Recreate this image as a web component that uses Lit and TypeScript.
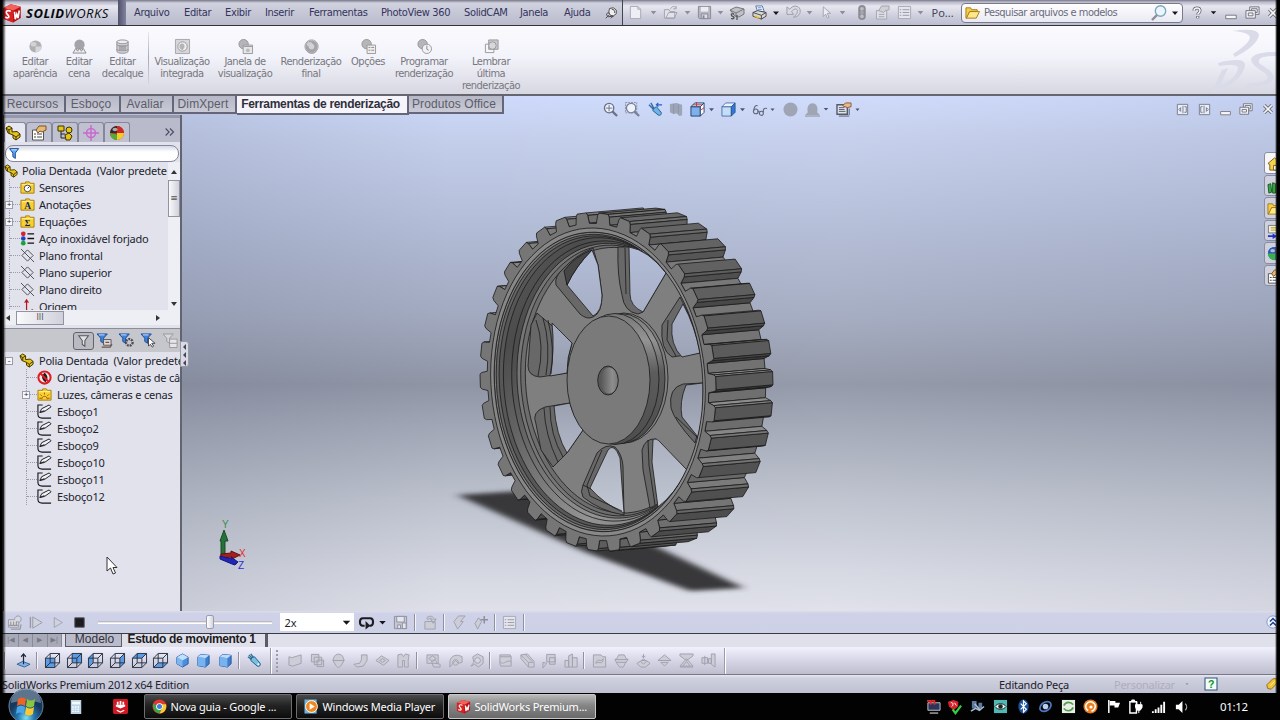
import {LitElement, css, html, svg} from 'lit';
import {customElement, property} from 'lit/decorators.js';

// Small icons, all on a 16 x 16 grid.
const ball = (fill: string) => svg`
  <circle cx="8" cy="8" r="6.500" fill=${fill}/>
  <ellipse cx="6" cy="5.500" rx="3" ry="2.400" fill="#fff" opacity=".45"/>`;
const globe = svg`
  <circle cx="8" cy="8" r="7" fill="#d22c22"/>
  <path d="M8 8V1a7 7 0 0 0-7 7z" fill="#2c2c30"/>
  <path d="M1 8a7 7 0 0 0 7 7l1-5z" fill="#4fae3a"/>
  <path d="M8 15a7 7 0 0 0 7-7L8 8z" fill="#f1cd2c"/>
  <path d="M8 1a7 7 0 0 1 7 7L9 7z" fill="#cc2a22"/>
  <ellipse cx="6" cy="4.500" rx="2.500" ry="1.700" fill="#fff" opacity=".6"/>`;
const folder = (inner: unknown) => svg`
  <path d="M1 3.500V14h14V3.500h-4L10 2H6v1.500z" fill="#f7cf2e" stroke="#a87d10"/>
  <path d="M2 5h12" stroke="#fff4a8"/>${inner}`;
const part = svg`
  <path d="M1 3l3-2 3 2v4l5-.5 3 2.500v3L11 15 8 13V10L3 8z" fill="#e8c417" stroke="#3c3200"/>
  <path d="M1 3l3 2 3-2M4 5v3M8 10l3 2 4-3M11 12v3" stroke="#3c3200" fill="none"/>`;
const funnel = (fill: string, stroke: string) => svg`
  <path d="M2 2h11L9 7.500V14l-3-2V7.500z" fill=${fill} stroke=${stroke} stroke-width="1.200"/>`;
const funnelSmall = svg`
  <path d="M0 1h11L7 5.500V11L4 9V5.500z" fill="#3f83d8" stroke="#1b4b9a"/>
  <path d="M2 2h6" stroke="#d5eaff"/>`;
const cubeLines = svg`<path d="M.5 5.500h10v10H.5zM5.500.5h10v10h-10zM.5 5.500l5-5M10.500 5.500l5-5M10.500 15.500l5-5M.5 15.500l5-5" fill="none" stroke="#26303e"/>`;
const cubeFace = (d: string) => svg`<path d=${d} fill="#5c9be6"/>${cubeLines}`;
const solidCube = (tilt: boolean) => tilt
  ? svg`<path d="M8 1l6 3.500v7L8 15l-6-3.500v-7z" fill="#4b8edb" stroke="#235a9e"/><path d="M2 4.500L8 8l6-3.500L8 1z" fill="#bfe0ff"/><path d="M8 8v7l-6-3.500v-7z" fill="#7cb6f2"/>`
  : svg`<path d="M2 4l3-2.500 9 1v9L10 15l-8-1.500z" fill="#3e7fcc" stroke="#235a9e"/><path d="M2 4l8 1.500V15l-8-1.500z" fill="#78b3f0"/><path d="M2 4l3-2.500 9 1-4 3z" fill="#b9dcff"/>`;
const wrench = svg`
  <path d="M2 2l4 4M4 1l3 4M1 4l4 3" stroke="#2f6f96" stroke-width="1.500"/>
  <path d="M5 5l3-1 6 7c1 2-1 4-3 3L4 8z" fill="#78bfe0" stroke="#1f5d86"/>
  <circle cx="12" cy="12" r="1" fill="#fff"/>`;
const restore = svg`
  <path d="M5 2h10v8H5z" fill="#f4f4f8" stroke="#6d6e7a"/><path d="M7 4h6v4H7z" fill="none" stroke="#6d6e7a"/>
  <path d="M1 6h10v8H1z" fill="#f4f4f8" stroke="#6d6e7a"/><path d="M3.500 8.500h5v3h-5z" fill="none" stroke="#6d6e7a"/>`;
const closeX = svg`
  <path d="M3 3l10 10M13 3L3 13" stroke="#6d6e7a" stroke-width="4.500"/>
  <path d="M3 3l10 10M13 3L3 13" stroke="#f7f7fa" stroke-width="2.200"/>`;
const magnifier = (stroke: string) => svg`
  <circle cx="6.500" cy="6.500" r="5" fill="#eef3fb" stroke=${stroke} stroke-width="1.400"/>
  <path d="M10 10l5 5" stroke=${stroke} stroke-width="2.400"/>`;
const swCube = svg`
  <path d="M1 4l6-3 8 2v9l-6 3.500-8-3z" fill="#b80f12"/>
  <path d="M1 4l6-3 8 2-6 3z" fill="#f0625c"/><path d="M1 4l8 2v9.500L1 12.500z" fill="#d92023"/>
  <path d="M7 6.700c-3-1.500-4.500.500-3 2s2 2.500 1 3-2.500-.5-2.500-.5M10 7l.6 6 1.200-4 1 3 1-6" stroke="#fff" stroke-width="1.300" fill="none"/>`;
const play = svg`<path d="M4 2l10 6-10 6z" fill="#d0d2de" stroke="#9a9ba8"/>`;
const grey = (d: string) => svg`<path d=${d} fill="#cdcdd8" stroke="#a0a1ae"/>`;

const ICONS: Record<string, unknown> = {
  logo: swCube,
  caret: svg`<path d="M5 6.500h6L8 10z" fill="#8d8e9c"/>`,
  caretDark: svg`<path d="M4 6h8l-4 4.500z" fill="#16161c"/>`,
  caretMid: svg`<path d="M5 6.500h6L8 10z" fill="#4c5570"/>`,
  pin: svg`<path d="M6 2l5-1 4 3 0 5-4 3-4-1-2-4z" fill="#eee" stroke="#444" stroke-width="1.200"/><path d="M6 8c-5-1-5 4-1 5l6-1-3 3M1 15l4-4M9 3c3 0 4 2 4 5" fill="none" stroke="#444" stroke-width="1.300"/>`,
  page: svg`<path d="M2.500 1.500h8l3 3v10h-11z" fill="#eeeef4" stroke="#a6a7b2"/><path d="M10.500 1.500v3h3" fill="none" stroke="#a6a7b2"/>`,
  open: svg`<path d="M1.500 5h5l1 2h5v7h-11zM3 14l3-6h9l-3 6z" fill="#e2e2ea" stroke="#a0a1ad"/><path d="M8 4c2-3 4-3 6-1m0-2v3h-3" fill="none" stroke="#a0a1ad"/>`,
  save: svg`<path d="M1.500 1.500h13v13h-12l-1-1z" fill="#b6b7c2" stroke="#858692"/><path d="M4 2h8v5H4z" fill="#ececf2"/><path d="M4.500 9.500h7v5h-7z" fill="#dcdce4" stroke="#858692"/><path d="M6 11h2v3H6z" fill="#858692"/>`,
  rebuild: svg`<path d="M1 5l6-3 8 2v5l-5 3-4-1z" fill="#c0c0c6" stroke="#77777f"/><path d="M1 5l6 3 8-4M7 8v4" fill="none" stroke="#77777f"/><path d="M5 9c-4-1-3 2-1 2.500s1 3-2 2M8 10v5" fill="none" stroke="#555" stroke-width="1.300"/>`,
  print: svg`<path d="M4 1h7l2 6H6z" fill="#fff" stroke="#5470a0"/><path d="M6 3h4M6.500 5H11" stroke="#4f86d0"/><path d="M1 8l5-2 9 2v4l-5 3-9-3z" fill="#d8d8d2" stroke="#44444a"/><path d="M1 8l9 3 5-3M10 11v4" fill="none" stroke="#44444a"/><path d="M3 12l5 2" stroke="#e9b92b" stroke-width="1.500"/>`,
  undo: svg`<path d="M1 2v8h7L6 7c3-4 7-3 6 0 0 3-2 4-4 6 5 0 8-4 7-8-1-5-8-5-11-.500z" fill="#d9d9e2" stroke="#9a9ba8"/>`,
  cursor: svg`<path d="M4 1v12l3-3 2 5 2-1-2-5h4z" fill="#ececf3" stroke="#9a9ba8"/>`,
  light: svg`<rect x="4.500" y="0" width="8" height="16" rx="4" fill="#8b8c94"/><circle cx="8.500" cy="4" r="2" fill="#bdbdc4"/><circle cx="8.500" cy="8" r="2" fill="#a5a5ad"/><circle cx="8.500" cy="12" r="2" fill="#bdbdc4"/>`,
  prop: svg`<path d="M1.500 6h11v9h-11z" fill="#dedee6" stroke="#a2a3ae"/><path d="M4 6l3-5h8v4l-4 1-2 2z" fill="#d0d0d8" stroke="#a2a3ae"/><path d="M4 10h6M4 12.500h6" stroke="#a2a3ae"/>`,
  list: svg`<path d="M1.500 1.500h13v13h-13z" fill="#e4e4ec" stroke="#a7a8b4"/><path d="M6 5h7M6 8h7M6 11h7M3 5h1.500M3 8h1.500M3 11h1.500" stroke="#9899a6"/>`,
  search: svg`<circle cx="9.500" cy="6" r="5.200" fill="#eaf6fd" stroke="#7ea6bd" stroke-width="1.400"/><path d="M6 10l-5 5" stroke="#8b8d99" stroke-width="2.400"/>`,
  help: svg`<path d="M4 5c0-5 8-5 8 0 0 3-3 3-3 5M9 12v3" fill="none" stroke="#5e5f6c" stroke-width="4"/><path d="M4 5c0-5 8-5 8 0 0 3-3 3-3 5M9 12.500v2" fill="none" stroke="#f6f6f9" stroke-width="2"/>`,
  min: svg`<path d="M2 10.500h12v4H2z" fill="#f6f6f9" stroke="#6d6e7a"/>`,
  restore, closeX,
  folderOpen: svg`<path d="M1 3h5l1 2h6v2H5l-3 7H1z" fill="#f4cf46" stroke="#a57a14"/><path d="M1.500 14L5 7h10.500L12 14z" fill="#ffe78c" stroke="#a57a14"/>`,

  ballGrey: svg`${ball('#b0b0b3')}<path d="M8 8h6.500A6.500 6.500 0 0 1 8 14.500z" fill="#d6d6da"/>`,
  ballFinal: svg`${ball('#a4a4a8')}<path d="M8 1a7 7 0 1 0 .1 0M4 13l2 2h5l2-2" fill="none" stroke="#97979b"/><circle cx="8" cy="8" r="3" fill="#d3d3d7"/>`,
  sceneGrey: svg`<circle cx="8" cy="6" r="5.500" fill="#a4a4a8"/><path d="M1 15l3-5 2 3 2-3 2 3 2-3 3 5z" fill="#eee" stroke="#8b8b90"/>`,
  decal: svg`<path d="M2 3v10c0 3 12 3 12 0V3z" fill="#d2d2d6" stroke="#8e8e94"/><ellipse cx="8" cy="3" rx="6" ry="2" fill="#eee" stroke="#8e8e94"/><path d="M4 7h8v5H4z" fill="#a9a9ae"/><path d="M2 6c0 2 12 2 12 0M2 11c0 2 12 2 12 0" fill="none" stroke="#8e8e94"/>`,
  integrated: svg`<path d="M.5.5h15v15H.5z" fill="#d7d7db" stroke="#a5a5aa"/><circle cx="8" cy="8" r="5" fill="#eee" stroke="#999"/><path d="M5 6c3-3 6 0 5 3l-2 3C5 11 4 8 5 6z" fill="#b3b3b8"/>`,
  window: svg`<circle cx="6" cy="5.500" r="5" fill="#b5b5ba" stroke="#999"/><path d="M5.500 6.500h10v9h-10z" fill="#e6e6ea" stroke="#999"/><path d="M6 8h9" stroke="#999"/><circle cx="10.500" cy="12" r="2" fill="#bbb"/>`,
  options: svg`<circle cx="6" cy="5.500" r="5" fill="#b5b5ba" stroke="#999"/><path d="M6.500 6.500h9v9h-9z" fill="#eee" stroke="#999"/><path d="M8 9h2M8 12h2M11 9h3M11 12h3" stroke="#888"/>`,
  schedule: svg`<circle cx="6" cy="5.500" r="5" fill="#b5b5ba" stroke="#999"/><circle cx="10.500" cy="10.500" r="5" fill="#f2f2f4" stroke="#999"/><path d="M10.500 7v4l2 1" fill="none" stroke="#888"/>`,
  recall: svg`<path d="M5 1h10v10H5z" fill="#c9c9ce" stroke="#999"/><path d="M1.500 5.500h9v9h-9z" fill="none" stroke="#999"/><circle cx="9" cy="7" r="4" fill="#d8d8dc" stroke="#999"/>`,

  zoomFit: svg`${magnifier('#6b7187')}<path d="M6.500 3v7M3 6.500h7" stroke="#6b7187"/>`,
  zoomArea: svg`<path d="M.5.5h12v11H.5z" fill="none" stroke="#8b90a4" stroke-dasharray="2 1"/>${magnifier('#7a8097')}`,
  prevView: svg`<path d="M1 3l7 7M3 1l4 7" stroke="#2e6ca8" stroke-width="1.500"/><path d="M6 7l3-2 5 6c1 2-1 4-3 3L5 9z" fill="#6db3e4" stroke="#245d94"/><path d="M9 3h6M11 1L9 3l2 2" fill="none" stroke="#2b5fc4" stroke-width="1.300"/>`,
  section: svg`<path d="M1 2l7-1 6 2v11l-3 1-3-3-3 1-4-2z" fill="#9fa5b8"/><path d="M5 2v10M10 3v9" stroke="#8d93a8"/>`,
  viewOr: svg`<path d="M1 5h10v10H1z" fill="#7db1ec" stroke="#24416d"/><path d="M1 5l4-4h10l-4 4z" fill="#dbe9fa" stroke="#24416d"/><path d="M11 5l4-4v10l-4 4z" fill="#fff" stroke="#24416d"/><path d="M7 0v5M3 3h10M11 9l4-3" stroke="#b8373c"/>`,
  display: svg`<path d="M1 5h10v10H1z" fill="#c4ddf8" stroke="#5172a5"/><path d="M1 5l4-4h10l-4 4z" fill="#e9f3fd" stroke="#5172a5"/><path d="M11 5l4-4v10l-4 4z" fill="#3278d6" stroke="#2c5593"/>`,
  glasses: svg`<circle cx="4" cy="10" r="2.500" fill="none" stroke="#62677a" stroke-width="1.200"/><circle cx="10" cy="12" r="2.200" fill="none" stroke="#62677a" stroke-width="1.200"/><path d="M2 9c0-4 2-6 4-5M12 11c0-4 1-5 4-4M6 10h2" fill="none" stroke="#62677a" stroke-width="1.200"/>`,
  appear: svg`<circle cx="8" cy="8" r="7.500" fill="#9fa5b5"/>`,
  scene: svg`<path d="M0 14l3-3c-3-13 13-13 10 0l3 3z" fill="#9fa5b5"/><path d="M0 15h16" stroke="#aab0c0" stroke-width="2"/>`,
  viewSet: svg`<path d="M0 3h11v10H0z" fill="#dfe3ea" stroke="#55596a" stroke-width="1.500"/><path d="M2 15h11M2 6h6M2 8h6M2 10h7M13 7v7" stroke="#55596a"/><path d="M6 4l3-3h6v4l-4 1z" fill="#e9b98a" stroke="#8a5a33"/>`,
  paneL: svg`<path d="M2.500 2.500h11v11h-11z" fill="#e9edf5" stroke="#767c8f"/><path d="M8.500 4v8M10 5h2v6h-2M6 6L4 8l2 2z" fill="none" stroke="#767c8f"/>`,
  paneR: svg`<path d="M2.500 2.500h11v11h-11z" fill="#e9edf5" stroke="#767c8f"/><path d="M7.500 4v8M6 5H4v6h2M10 6l2 2-2 2z" fill="none" stroke="#767c8f"/>`,

  part,
  propMgr: svg`<path d="M1.500 5h11v10h-11z" fill="#fff" stroke="#555"/><path d="M3 9h2M3 12h2M6 9h5M6 12h5" stroke="#444"/><path d="M5 5l3-4h7v4l-4 2-2-1-2 2z" fill="#e8b878" stroke="#7c5322"/>`,
  config: svg`<path d="M1 1h6v5H1z" fill="#e8c417" stroke="#3c3200"/><path d="M4 6v7h4M4 9h4" stroke="#222" fill="none"/><circle cx="12" cy="5" r="3" fill="#e8c417" stroke="#3c3200"/><path d="M8 10l4-2 3 3-2 4H9z" fill="#e8c417" stroke="#3c3200"/>`,
  dimx: svg`<circle cx="8" cy="8" r="4.500" fill="none" stroke="#c968cf" stroke-width="1.400"/><path d="M8 0v16M0 8h16" stroke="#c968cf" stroke-width="1.400"/>`,
  globe,
  globeSide: svg`<circle cx="8" cy="8" r="7" fill="#2f62c8"/><path d="M8 1a7 7 0 0 0-7 7h7z" fill="#2c58b4"/><path d="M1 8a7 7 0 0 0 8 7V8z" fill="#3cae4a"/><path d="M9 2a7 7 0 0 1 6 6H9z" fill="#cf2b2b"/><ellipse cx="6" cy="5" rx="2.500" ry="1.700" fill="#fff" opacity=".6"/>`,
  chev2: svg`<path d="M3 4l4 4-4 4M8 4l4 4-4 4" fill="none" stroke="#4a4b60" stroke-width="1.300"/>`,
  funnelBlue: svg`${funnel('#5fa8ec', '#15489c')}<path d="M4 3.500h7" stroke="#e4f3ff"/>`,
  funnelBare: funnel('#e2e2e6', '#55555c'),
  fAnim: svg`${funnelSmall}<path d="M7 7h8v6H7z" fill="#ddd" stroke="#555"/><path d="M5 15h9l2-3M9 10h4" stroke="#774f44" stroke-width="1.400"/>`,
  fDrive: svg`${funnelSmall}<circle cx="11" cy="10" r="3.500" fill="none" stroke="#4b4b52" stroke-width="2.500" stroke-dasharray="2 1"/>`,
  fSel: svg`${funnelSmall}<path d="M8 5v9l2-2 2 3 1.500-1-2-3H15z" fill="#fff" stroke="#444"/>`,
  fRes: svg`<path d="M0 1h11L7 5.500V11L4 9V5.500z" fill="#d6d6dc" stroke="#999"/><path d="M7 6.500h8v9H7zM7 11h8" fill="#e6e6ea" stroke="#999"/>`,
  sensor: folder(svg`<circle cx="8" cy="9" r="3.500" fill="#fff" stroke="#444"/><path d="M8 9l2-2" stroke="#222"/>`),
  annot: folder(svg`<text x="8" y="12.800" text-anchor="middle" font-size="10" font-weight="700" font-family="Liberation Serif, serif" fill="#0c2a78">A</text>`),
  equat: folder(svg`<text x="8" y="12.500" text-anchor="middle" font-size="9" font-weight="700" font-family="Liberation Serif, serif" fill="#0c1a58">Σ</text>`),
  lights: folder(svg`<path d="M5 13c0-4 6-4 6 0M8 6v2M3.500 8l1.500 1.500M12.500 8L11 9.500M2.500 12h2M11.500 12h2" fill="none" stroke="#9a4c10"/>`),
  material: svg`<circle cx="3.500" cy="3" r="2.500" fill="#d6252a"/><circle cx="3.500" cy="8" r="2.500" fill="#2440c8"/><circle cx="3.500" cy="13" r="2.500" fill="#18a338"/><path d="M8 3h7M8 8h7M8 13h7" stroke="#111" stroke-width="1.400"/>`,
  plane: svg`<path d="M1 1l14 14M8 2l6 6-6 6-6-6zM7 7l2 2" fill="none" stroke="#4a4a52"/>`,
  origin: svg`<path d="M7 13V2M5 4l2-3 2 3M3 13h7" fill="none" stroke="#b5161c" stroke-width="1.300"/><circle cx="13" cy="12" r="1.200" fill="#b5161c"/>`,
  noView: svg`<circle cx="8" cy="8" r="6.500" fill="#f5e9e9" stroke="#e01b22" stroke-width="2.200"/><path d="M8 3c-4 3-3 8 1 10 3-3 3-7-1-10z" fill="#1c1c1c"/><path d="M3.500 3.500l9 9" stroke="#e01b22" stroke-width="2"/>`,
  sketch: svg`<path d="M6 1H1v10c0 3 2 4 4.500 4H15" fill="none" stroke="#16161a" stroke-width="1.200"/><path d="M3 9l2-4 8-4 2 2-7 5zM3 9l5-2" fill="#f2f2f6" stroke="#16161a"/>`,

  house: svg`<path d="M1 8l7-6 7 6-2 1v6H3V9z" fill="#f5d34c" stroke="#7c5a12"/><path d="M7 10h3v5H7z" fill="#fff" stroke="#7c5a12"/>`,
  library: svg`<path d="M1 6l3-1 1 9-3 1zM6 4l3 1v10H6z" fill="#35a845" stroke="#175a22"/><path d="M10 3l4-1v12l-4 1z" fill="#e8b33a" stroke="#7c5a12"/>`,
  palette: svg`<path d="M1.500 1.500h12v8h-12z" fill="#eee" stroke="#777"/><path d="M4 4h8M4 6.500h8" stroke="#c6b62c" stroke-width="1.500"/><path d="M1 13h7" stroke="#1e2fd0" stroke-width="1.800"/><path d="M6 10l5 3-5 3z" fill="#1e2fd0"/>`,

  calc: svg`<path d="M1.500 5h11v8h-11z" fill="#ddd" stroke="#9899a6"/><path d="M8 4c1-4 7-4 7 0s-2 4-5 3" fill="#d8d8e0" stroke="#9899a6"/><path d="M4 15h10l1-5M4 7v4M7 7v4M10 7v4M2 11h10" stroke="#9899a6" stroke-width="1.300"/>`,
  playStart: svg`<path d="M1.500 2v12" stroke="#9a9ba8" stroke-width="1.500"/>${play}`,
  play,
  stop: svg`<path d="M3 3h10v10H3z" fill="#1c1c20" stroke="#50505a"/>`,
  loop: svg`<path d="M6 11.500H4c-4 0-4-8 0-8h8c4 0 4 8 0 8h-1" fill="none" stroke="#1b1b20" stroke-width="2.200"/><path d="M7 6.500v9l5-4z" fill="#1b1b20"/>`,
  saveG: svg`<path d="M1.500 1.500h13v13h-13z" fill="#c6c7d4" stroke="#8f909e"/><path d="M4 1.500h8v6H4z" fill="#e6e6ef" stroke="#8f909e"/><path d="M5 10.500h3v4H5zM10 8.500h4v6h-4z" fill="#e6e6ef" stroke="#8f909e"/>`,
  wizard: grey('M2 7h11v8H2zM4 3c3-3 7-2 8 2l2-1-3 5-3-4 2 0c-1-2-3-2-5 0z'),
  key: grey('M2 7l5-6h7l-5 6 3 0-6 8z'),
  keyAdd: svg`${grey('M2 9l4-6 3 4-4 8z')}<path d="M8 5h8M12 1v8" stroke="#8f909e" stroke-width="1.600"/>`,
  up2: svg`<circle cx="8" cy="8" r="7" fill="#eef3fc" stroke="#8290b4"/><path d="M4.500 7.500L8 4l3.500 3.500M4.500 12L8 8.500l3.500 3.500" fill="none" stroke="#1c3f90" stroke-width="1.700"/>`,

  normal: svg`<path d="M1 12l6-3 8 3-6 3z" fill="#7fb4e6" stroke="#2e6296"/><path d="M8 12V1M5.500 4L8 1l2.500 3" stroke="#1c2a3c" stroke-width="1.300" fill="none"/>`,
  cFront: cubeFace('M.5 5.500h10v10H.5z'),
  cBack: cubeFace('M5.500.5h10v10h-10z'),
  cLeft: cubeFace('M.5 5.500l5-5v10l-5 5z'),
  cRight: cubeFace('M10.500 5.500l5-5v10l-5 5z'),
  cTop: cubeFace('M.5 5.500l5-5h10l-5 5z'),
  cBottom: cubeFace('M.5 15.500l5-5h10l-5 5z'),
  iso: solidCube(true),
  tri: solidCube(false),
  wrench,
  g1: grey('M1 4l3 1 10-3v9L5 14l-4-1z'),
  g2: grey('M1.500 1.500h8v8h-8zM4.500 4.500h8v8h-8zM7.500 7.500h7v7h-7z'),
  g3: grey('M3 5c1-5 9-5 10 0l1 3-3 5c-2 3-4 3-6 0L2 8zM2 8h12'),
  g4: grey('M1 12l6-1 2-4V2h6v6l-4 6-7 1z'),
  g5: grey('M1 8l6-5 8 5-6 5zM5 8l3-2 3 2-3 2z'),
  g6: grey('M2 2l4-1 2 3 2-3 4 1-1 6 0 7H9V8H7v7H2z'),
  g7: grey('M1 2h12v9H1zM3 6l4-3 4 3-4 3zM6 9c3-3 6-1 5 2l4 1v3H8z'),
  g8: grey('M2 9c1-7 8-8 13-5v6l-4 1-3-3-6 7zM8 7a3 3 0 1 0 .1 0'),
  g9: grey('M3 4l5-3 6 3v7l-5 4-4-3-4 2 3-4zM8 5a3 3 0 1 0 .1 0'),
  g10: grey('M2 2h11l1 2v10H3l-1-2zM2 4h12M2 9c4 5 6-2 12 0'),
  g11: grey('M1 2l7-1 7 8v6h-6l-8-9zM1 2l8 8v5M9 10h5M5 1l8 8'),
  g12: grey('M5 1.500h9v8H5zM8 5h6v7H8zM1 10l4 1-4 5z'),
  g13: grey('M1 8h4v7H1zM5 3l4-2v14H5zM9 5h5v10H9z'),
  g14: grey('M1.500 2h8l2 2h3v11h-13zM4 11c2-7 5 0 8-5-1 8-5 2-8 5z'),
  g15: grey('M3 6l2-4h6l2 4 2 1-3 4-2 4H6l-3-4L1 7zM1 7h14M3 10h10'),
  g16: grey('M1 11l5-3h5l4 3-5 4H5zM5 9l3-3 3 3-3 3zM8 1v4M6 3l2 2 2-2'),
  g17: grey('M1 8l7-6 7 6zM4 10h8l-4 4zM2 8h12'),
  g18: grey('M1 1h14v2L8 8 1 3zM1 14l7-8 7 8zM4 14l4-5 4 5M1 15h14'),
  g19: grey('M1 5h6v6H1zM8 6h3v5H8zM11 1h4v14l-4-3zM4 3v10'),

  helpGreen: svg`<path d="M0 0h16v16H0z" fill="#f3fbf7" stroke="#31557c" stroke-width="1.400"/><text x="8" y="13" font-size="14" font-weight="700" text-anchor="middle" font-family="Liberation Sans, sans-serif" fill="#089427">?</text>`,
  tag: svg`<path d="M2 9l7-7h5l1 4-8 8-4-1z" fill="#f0c434" stroke="#8f6510"/><path d="M6 10l5-5" stroke="#fff3b4"/>`,
  calcWin: svg`<path d="M2 0h12v16H2z" fill="#bcd3e6"/><path d="M3.500 2h9v3h-9z" fill="#f3fafe"/><path d="M3.500 8h9M3.500 10.500h9M3.500 13h9" stroke="#f7fbff" stroke-width="1.500" stroke-dasharray="2 1"/>`,
  pdf: svg`<rect width="16" height="16" rx="1.500" fill="#d01822"/><path d="M5 6V3M8 6V2M11 6V3" stroke="#fff" stroke-width="1.800"/><path d="M3 6h10v2l-5 2-5-2z" fill="#fff"/><path d="M4 12l4 2 4-2" stroke="#fff" stroke-width="1.300"/>`,
  chrome: svg`<circle cx="8" cy="8" r="7.500" fill="#e0392c"/><path d="M1.300 4.800C0 9 3 15 8 15.500L10 10 6 8z" fill="#39a84b"/><path d="M15 5.500c1 4-1 9.500-7 10l3-6V5.500z" fill="#f7cb32"/><circle cx="8" cy="8" r="3.600" fill="#fff"/><circle cx="8" cy="8" r="2.700" fill="#3f82dd"/>`,
  wmp: svg`<path d="M.5.5h13v15H.5z" fill="#6db5e4"/><circle cx="8" cy="8" r="6.300" fill="#f0861c" stroke="#fff"/><path d="M6 4.500l5.500 3.500L6 11.500z" fill="#fff"/>`,
  t1: svg`<path d="M2 4h13v8H2z" fill="#2a345a" stroke="#c7c7cc"/><path d="M4 15h9" stroke="#aaa" stroke-width="1.500"/><path d="M1 2h4v4M6 2h3v4" fill="none" stroke="#e82525" stroke-width="1.800"/>`,
  t2: svg`<path d="M1 3l6-2 5 2v5l-5 4-5-4z" fill="#d4242a"/><path d="M4 4c3-1 3 3 1 4M8 4l2 3" stroke="#fff" fill="none"/><path d="M6 11l3 4 6-8" fill="none" stroke="#2fd042" stroke-width="2.400"/>`,
  t3: svg`<path d="M2 2h5v8H2zM9 4h4v6H9z" fill="#5d7a9c"/><path d="M1 13l5-3 4 2 5-4M5 5l6 7" stroke="#a9bed4" stroke-width="1.600" fill="none"/>`,
  t4: svg`<path d="M1 1h14v14H1z" fill="#4db8b4"/><path d="M2 8c3-4 9-4 12 0-3 4-9 4-12 0z" fill="#dff4f2" stroke="#222"/><circle cx="8" cy="8" r="2.400" fill="#222"/>`,
  bt: svg`<ellipse cx="8" cy="8" rx="5.500" ry="7.500" fill="#1a4f9c"/><path d="M5 5l6 6-3 3V2l3 3-6 6" fill="none" stroke="#fff" stroke-width="1.300"/>`,
  orbit: svg`<ellipse cx="8" cy="8" rx="6.500" ry="4.500" fill="none" stroke="#4e78c0" stroke-width="1.800" transform="rotate(-35 8 8)"/><circle cx="8" cy="8" r="3" fill="#b9cdf0"/>`,
  sync: svg`<path d="M1 1h14v14H1z" fill="#e8eee4"/><path d="M3 7c2-5 8-4 10-1M13 9c-2 5-8 4-10 1" fill="none" stroke="#569c50" stroke-width="1.800"/>`,
  avast: svg`<circle cx="8" cy="8" r="7.500" fill="#ee7d1d"/><circle cx="8" cy="8" r="5" stroke="#fff" stroke-width="1.800" stroke-dasharray="27 6" transform="rotate(120 8 8)"/><circle cx="8.500" cy="8.500" r="1.700" fill="#fff"/>`,
  flag: svg`<path d="M3 1v14" stroke="#fff" stroke-width="1.600"/><path d="M4 2h6v2h5l-2 5H9V7H4z" fill="#fff"/>`,
  power: svg`<path d="M2 3h7v12H2z" fill="none" stroke="#fff" stroke-width="1.500"/><path d="M4 1h3v2H4zM8 6h7v3l-2 3h-3L8 9zM9.500 3v3M13.500 3v3M11.500 12v3" fill="#fff" stroke="#fff"/>`,
  signal: svg`<path d="M2 15v-2M5 15v-4M8 15V9M11 15V6M14 15V3" stroke="#fff" stroke-width="2"/>`,
  sound: svg`<path d="M2 6h3l4-4v13l-4-4H2z" fill="#fff"/><path d="M12 5c2 2 2 5 0 7" fill="none" stroke="#aaa" stroke-width="1.300"/>`,
};

@customElement('sw-icon')
export class SwIcon extends LitElement {
  @property() name = '';
  @property({type: Number}) size = 16;

  static get styles() {
    return css`
      :host { display: block; flex: none; }
      svg { display: block; overflow: visible; }
    `;
  }

  render() {
    return html`<svg width=${this.size} height=${this.size} viewBox="0 0 16 16" fill="none">${ICONS[this.name]}</svg>`;
  }
}

type Slot = [name: string, center: number, size?: number];

// Lays a run of icons out in flow, each one centred on its own tick.
function strip(start: number, slots: Slot[]) {
  let x = start;
  return slots.map(([name, center, size = 15]) => {
    const w = name === '|' ? 2 : size;
    const gap = center - w / 2 - x;
    x = center + w / 2;
    return name === '|'
      ? html`<i class="sep" style="margin-left:${gap}px"></i>`
      : html`<sw-icon name=${name} size=${size} style="margin-left:${gap}px"></sw-icon>`;
  });
}

// Pulley projection: radius is relative to the tooth tips, depth to the width.
type Pt = [number, number];
const TEETH = 34;
const project = (r: number, a: number, depth = 0): Pt => [
  598 + 118 * r * Math.cos(a) + 57 * depth,
  382 + 169 * r * Math.sin(a) + 9 * r * Math.cos(a) - 5 * depth,
];
const toPath = (pts: Pt[]) => 'M' + pts.map(([x, y]) => `${x.toFixed(1)} ${y.toFixed(1)}`).join('L') + 'Z';
const circle = (r: number, depth: number) =>
  toPath(Array.from({length: 90}, (_, i) => project(r, i * Math.PI / 45, depth)));

function pulleyTeeth() {
  const pitch = Math.PI * 2 / TEETH;
  const profile: {r: number, a: number}[] = [];
  for (let i = 0; i < TEETH; i++) {
    const a = (i - 0.25) * pitch;
    profile.push({r: 0.938, a: a - pitch * 0.33}, {r: 0.985, a: a - pitch * 0.27},
      {r: 1, a: a - pitch * 0.21}, {r: 1, a: a + pitch * 0.21},
      {r: 0.985, a: a + pitch * 0.27}, {r: 0.938, a: a + pitch * 0.33});
  }
  const quads = profile.map((p, i) => {
    const q = profile[(i + 1) % profile.length];
    const f1 = project(p.r, p.a), f2 = project(q.r, q.a);
    const nx = f2[1] - f1[1], ny = f1[0] - f2[0];
    const len = Math.hypot(nx, ny);
    const flat = p.r === q.r;
    const tone = flat ? (p.r === 1 ? 88 : 112) - ny / len * 16 : 100 - ny / len * 46;
    const level = Math.round(tone);
    return {
      visible: nx * 57 - ny * 5 > 0,
      depth: p.r * Math.cos(p.a) + q.r * Math.cos(q.a),
      fill: `rgb(${level},${level},${level})`,
      d: toPath([f1, f2, project(q.r, q.a, 1), project(p.r, p.a, 1)]),
    };
  });
  return {
    sides: quads.filter((q) => q.visible).sort((a, b) => a.depth - b.depth),
    face: toPath(profile.map((p) => project(p.r, p.a))),
  };
}

// Openings between the spokes: the whole cut, then the part one can see through.
const WINDOWS = [
  ['M618 247Q617 275 622 295Q624 312 638 314L643 312L666 273Q648 251 629 247Z', 'M629 247Q648 250 666 273L643 312Q630 306 630 294Z'],
  ['M680 297L662 325Q660 350 672 357L700 353Q694 322 680 297Z', 'M683 304L672 324Q670 345 682 357L700 353Q695 326 683 304Z'],
  ['M703 383L683 384Q668 388 671 408Q674 420 695 443L703 413Z', 'M703 383L686 385Q679 402 682 417L698 437L703 413Z'],
  ['M642 450Q645 438 656 439L687 470Q672 500 650 508L643 470Z', 'M653 440Q656 437 661 443L687 470Q675 494 658 507L652 462Z'],
  ['M597 453Q606 443 615 447Q622 454 623 466L624 515Q600 511 583 497Q580 492 583 485Z', 'M608 450Q614 442 620 458L624 513Q604 504 590 488Z'],
  ['M570 403L545 407Q531 412 536 424L541 450L553 467L567 453L583 430Q573 416 570 403Z', 'M570 403L554 406Q556 435 567 453L583 430Q573 416 570 403Z'],
  ['M537 313L572 343Q567 357 567 373L540 377Q528 376 528 366L531 325Z', 'M552 323L572 343Q567 357 567 373L550 376Q555 350 552 323Z'],
  ['M593 248L598 265L602 295Q602 313 593 317Q587 320 580 314L556 285Q554 277 563 269Q576 255 593 248Z', 'M592 250L598 265L602 295Q602 312 593 316L567 285Q576 266 592 250Z'],
];

@customElement('model-view')
export class ModelView extends LitElement {
  static get styles() {
    return css`
      :host { display: block; flex: 1; min-width: 0; }
      svg { display: block; }
      .axis { font: 10px "Liberation Sans", sans-serif; }
    `;
  }

  render() {
    const {sides, face} = pulleyTeeth();
    const rings: [number, number, string][] = [
      [0.885, 0.01, '#7c7c7c'], [0.872, 0.02, '#666'], [0.862, 0.05, '#575757'], [0.85, 0.1, 'url(#bowl)'],
      [0.828, 0.2, 'url(#bowl)'], [0.812, 0.26, '#767676'], [0.8, 0.3, '#6d6d6d'], [0.785, 0.35, '#7f7f7f'],
    ];
    return html`
      <svg width="1094" height="496" viewBox="182 115 1094 496">
        <defs>
          <linearGradient id="bowl" x1="0" y1="0" x2="1" y2="1">
            <stop offset="0" stop-color="#5c5c5c"/><stop offset=".2" stop-color="#4c4c4c"/>
            <stop offset=".7" stop-color="#949494"/><stop offset="1" stop-color="#757575"/>
          </linearGradient>
          <linearGradient id="hub" x1="0" y1="0" x2="0" y2="1">
            <stop offset="0" stop-color="#777"/><stop offset=".2" stop-color="#949494"/>
            <stop offset=".45" stop-color="#5c5c5c"/><stop offset="1" stop-color="#4d4d4d"/>
          </linearGradient>
          <linearGradient id="bore"><stop offset="0" stop-color="#555"/><stop offset=".7" stop-color="#8e8e8e"/><stop offset="1" stop-color="#7a7a7a"/></linearGradient>
          <linearGradient id="sky" x1="0" y1="245" x2="0" y2="515" gradientUnits="userSpaceOnUse">
            <stop offset="0" stop-color="#b4bed9"/><stop offset=".35" stop-color="#a2a9bd"/>
            <stop offset=".52" stop-color="#9298a8"/><stop offset=".7" stop-color="#a9afbe"/><stop offset="1" stop-color="#c2c7d3"/>
          </linearGradient>
          <filter id="soft" x="-10%" y="-20%" width="120%" height="140%"><feGaussianBlur stdDeviation="5 2"/></filter>
          <clipPath id="opening"><path d=${circle(0.885, 0.01)}/></clipPath>
        </defs>
        <path d="M457 495L520 491L600 520L744 588L690 591L585 552Z" fill="#38383a" filter="url(#soft)"/>
        <g stroke="#1b1b1b" stroke-width=".8" stroke-linejoin="round">
          ${sides.map((q) => svg`<path d=${q.d} fill=${q.fill}/>`)}
          <path d=${face} fill="#767676"/>
          <path d=${circle(0.91, 0)} fill="#888"/>
          <g clip-path="url(#opening)">
            ${rings.map(([r, depth, fill]) => svg`<path d=${circle(r, depth)} fill=${fill}/>`)}
            ${WINDOWS.map(([cut, hole]) => svg`<path d=${cut} fill="#686868"/><path d=${hole} fill="url(#sky)"/>`)}
            <path d="M536 320Q545 345 538 376M543 318Q551 345 546 375M548 320Q555 348 551 374M544 408Q545 435 558 462M550 407Q550 435 563 457M583 485L591 489M625 248L626 294M565 270L567 285M668 320L667 340L676 356M676 417L698 438M648 440L649 465L655 505M602 450L587 485L590 496L622 511" fill="none"/>
            <path d="M564 271Q575 256 592 250Q576 266 567 285Z" fill="#464646"/>
          </g>
          <path d=${circle(0.885, 0.01)} fill="none"/>
          <ellipse cx="624" cy="378" rx="44" ry="65" fill="#7f7f7f"/>
          <ellipse cx="621" cy="378.500" rx="44" ry="65" fill="url(#hub)"/>
          <ellipse cx="615" cy="379" rx="44" ry="65.500" fill="url(#hub)"/>
          <ellipse cx="608.500" cy="380" rx="41.500" ry="64" fill="#7a7a7a"/>
          <ellipse cx="608" cy="380.500" rx="10.300" ry="14.500" fill="#575757"/>
          <ellipse cx="609" cy="380.500" rx="8.600" ry="13" fill="url(#bore)" stroke="none"/>
        </g>
        <g>
          <path d="M221 557V541H220L224 530L228 541H225V556Z" fill="#24713a" stroke="#164d26"/>
          <path d="M221 554L231 553V551L240 555L232 559V557L221 558Z" fill="#a51d20" stroke="#641010"/>
          <path d="M220 556L232 559L231 557L238 562L235 565L232 564L220 559Z" fill="#2226b8" stroke="#151777"/>
          <text class="axis" x="222" y="528" fill="#3e8a52">Y</text>
          <text class="axis" x="239" y="557" fill="#e02c30">X</text>
          <text class="axis" x="238" y="569" fill="#2a2fd0">Z</text>
        </g>
      </svg>`;
  }
}

const MENU: [string, number][] = [
  ['Arquivo', 50], ['Editar', 41], ['Exibir', 40], ['Inserir', 44], ['Ferramentas', 72],
  ['PhotoView 360', 83], ['SolidCAM', 56], ['Janela', 44], ['Ajuda', 41],
];

const RIBBON: [string, string[], number][] = [
  ['ballGrey', ['Editar', 'aparência'], 44], ['sceneGrey', ['Editar', 'cena'], 44], ['decal', ['Editar', 'decalque'], 43],
  ['integrated', ['Visualização', 'integrada'], 60], ['window', ['Janela de', 'visualização'], 66],
  ['ballFinal', ['Renderização', 'final'], 66], ['options', ['Opções'], 48],
  ['schedule', ['Programar', 'renderização'], 64], ['recall', ['Lembrar', 'última', 'renderização'], 70],
];

const TABS: [string, number][] = [
  ['Recursos', 62], ['Esboço', 55], ['Avaliar', 53], ['DimXpert', 63], ['Ferramentas de renderização', 172], ['Produtos Office', 95],
];

const ROOT_LABEL = 'Polia Dentada\u00a0 (Valor predete';

const FEATURES: [string, string, boolean?][] = [
  ['sensor', 'Sensores'], ['annot', 'Anotações', true], ['equat', 'Equações', true],
  ['material', 'Aço inoxidável forjado'], ['plane', 'Plano frontal'], ['plane', 'Plano superior'],
  ['plane', 'Plano direito'], ['origin', 'Origem'],
];

const STUDY: [string, string, boolean?][] = [
  ['noView', 'Orientação e vistas de câ'], ['lights', 'Luzes, câmeras e cenas', true],
  ['sketch', 'Esboço1'], ['sketch', 'Esboço2'], ['sketch', 'Esboço9'],
  ['sketch', 'Esboço10'], ['sketch', 'Esboço11'], ['sketch', 'Esboço12'],
];

const TASKS: [string, string, boolean?][] = [
  ['chrome', 'Nova guia - Google ...'], ['wmp', 'Windows Media Player'], ['logo', 'SolidWorks Premium...', true],
];

@customElement('app-root')
export class AppRoot extends LitElement {
  static get styles() {
    return css`
      :host {
        background: #000;
        box-sizing: border-box;
        color: #22222c;
        display: flex;
        flex-direction: column;
        font: 11px/13px "Noto Sans", "Open Sans", sans-serif;
        height: 720px;
        overflow: hidden;
        position: relative;
        white-space: nowrap;
        width: 1280px;
      }
      * { box-sizing: border-box; }
      .row { align-items: center; display: flex; flex: none; }
      .sep { background: #8f90a2; border-right: 1px solid #f3f3fa; flex: none; height: 17px; width: 2px; }
      .title {
        background: linear-gradient(#77788a, #b8b8c8 2px, #e8e8f1 6px, #d0d1de 15px, #bcbdcf);
        border-bottom: 1px solid #33333c;
        height: 26px;
        padding-left: 2px;
      }
      .brand { color: #08080c; font: italic 700 13px "Open Sans", sans-serif; letter-spacing: .5px; margin-left: 4px; width: 92px; }
      .brand span { font-weight: 400; }
      .brand-edge { background: linear-gradient(90deg, #51516c, #81829d); height: 25px; width: 8px; }
      .menu {
        background: linear-gradient(#777789, #d1d2df 3px, #b9bacb);
        border-right: 1px solid #44444e;
        height: 25px;
        padding-left: 8px;
        width: 497px;
      }
      .menu-item { color: #33335c; flex: none; font: 11px "DejaVu Sans Condensed", "DejaVu Sans", sans-serif; letter-spacing: -.35px; }
      .doc { color: #44445c; margin-left: 4px; width: 29px; }
      .search {
        background: linear-gradient(#fff, #e9e9f3);
        border: 1px solid #787a8c;
        border-radius: 4px;
        color: #6a6a7c;
        font: 11px "DejaVu Sans Condensed", sans-serif;
        height: 20px;
        letter-spacing: -.5px;
        width: 222px;
      }
      .search-text { margin-left: 4px; width: 167px; }
      .ribbon {
        align-items: flex-start;
        background: linear-gradient(#fbfbfe, #f3f3fb 45%, #d7d7e2);
        border-bottom: 2px solid #666670;
        display: flex;
        flex: none;
        height: 70px;
        padding-left: 13px;
      }
      .tool { align-items: center; color: #77777d; display: flex; flex: none; flex-direction: column; padding-top: 13px; }
      .tool-label { font: 11px/12px "DejaVu Sans Condensed", sans-serif; letter-spacing: -.5px; padding-top: 2px; text-align: center; }
      .ribbon .divider { background: linear-gradient(#e8e8ee, #a9a9b6, #d6d6e0); flex: none; height: 52px; margin: 6px 3px 0 4px; width: 1px; }
      .ds { margin: 2px 3px 0 auto; }
      .main {
        background:
          linear-gradient(90deg, rgba(80, 88, 112, .24), rgba(80, 88, 112, 0) 35%, rgba(255, 255, 255, .05) 65%, rgba(90, 96, 120, .08)),
          linear-gradient(#cedafc, #c4cfec 8%, #b1bbd5 26%, #a1a9bf 43%, #8f95a5 56%, #a0a6b5 64%, #bcc1cd 78%, #d4d7e1 92%, #dfe0e9);
        flex: none;
        height: 515px;
      }
      .head { align-items: flex-start; height: 19px; padding-left: 4px; }
      .tab {
        background: linear-gradient(#b7b8c7, #c9cad6);
        border: solid #66667a;
        border-width: 0 2px 2px 0;
        color: #5c5d69;
        flex: none;
        font: 12px/16px "Liberation Sans", sans-serif;
        height: 18px;
        letter-spacing: .1px;
        padding-right: 3px;
        text-align: center;
      }
      .tab.on { background: #f4f4fa; color: #2f2f3c; font-weight: 700; height: 19px; letter-spacing: -.3px; }
      .views { height: 19px; padding-top: 7px; }
      .body { align-items: stretch; height: 496px; }
      .panel { background: #e1e2ec; border-left: 1px solid #555; border-right: 2px solid #62646f; flex: none; margin-left: 3px; overflow: hidden; width: 179px; }
      .ptabs { align-items: flex-end; background: #b9bbcc; border-top: 3px solid #9697a8; height: 27px; }
      .ptab { background: #bfc1d1; border: 1px solid #85879a; border-bottom: 0; border-radius: 3px 3px 0 0; height: 20px; padding: 2px 5px 0 4px; width: 26px; }
      .ptab.on { background: #e6e7f0; padding-left: 0; width: 22px; }
      .ptabs .more { margin-left: 33px; padding-bottom: 3px; }
      .filter { background: linear-gradient(#d6d8e4, #fff 6px); border: 1px solid #84879f; border-radius: 8px; height: 17px; margin: 3px 1px 0; padding-left: 2px; }
      .tree { display: flex; height: 148px; }
      .nodes { flex: 1; min-width: 0; overflow: hidden; }
      .node { align-items: center; display: flex; height: 17px; letter-spacing: -.22px; }
      .node sw-icon { margin-right: 4px; }
      .twig { align-items: center; align-self: stretch; border-left: 1px dotted #9a9bab; display: flex; flex: none; margin-left: 5px; width: 11px; }
      .twig::after { border-top: 1px dotted #9a9bab; content: ''; width: 12px; }
      .plus { background: #f8f8fc; border: 1px solid #9a9bab; flex: none; font: 8px/6px "Liberation Mono", monospace; height: 8px; margin: 0 -4px 0 -5px; text-align: center; width: 8px; z-index: 1; }
      .vbar { align-items: center; background: #eeeff4; display: flex; flex-direction: column; width: 12px; }
      .thumb { background: linear-gradient(90deg, #fafafc, #cfd0da); border: 1px solid #9293a0; color: #555; font: 9px/34px "DejaVu Sans"; height: 37px; text-align: center; width: 12px; }
      .arrow { border: 3px solid transparent; height: 0; width: 0; }
      .arrow.up { border-bottom: 4px solid #333; margin: 5px 0 6px; }
      .arrow.down { border-top: 4px solid #333; margin: auto 0 1px; }
      .arrow.left { border-right: 4px solid #333; margin: 0 6px 0 -1px; }
      .arrow.right { border-left: 4px solid #333; margin: 0 0 0 92px; }
      .hbar { background: #eeeff4; height: 15px; }
      .hbar .thumb { font: 8px/11px "DejaVu Sans"; height: 14px; width: 48px; }
      .fbar { background: #c6c7cc; border-top: 1px solid #8b8d9a; height: 24px; margin-top: 3px; }
      .fbox { background: #b9bac2; border: 1px solid #62636e; border-radius: 3px; height: 18px; margin-left: 69px; padding: 1px 0 0 3px; width: 21px; }
      .study .twig { margin-left: 22px; }
      .study .node sw-icon { margin-right: 5px; }
      .root-box { background: #f8f8fc; border: 1px solid #9a9bab; flex: none; font: 8px/6px "Liberation Mono", monospace; height: 8px; margin: 0 6px 0 1px; text-align: center; width: 8px; }
      .handle { background: #d9dae4; border: 1px solid #9899a8; border-radius: 0 3px 3px 0; display: flex; flex-direction: column; height: 26px; left: 180px; padding: 1px 0 0 1px; position: absolute; top: 341px; width: 9px; }
      .handle i { border: 3px solid transparent; border-right: 3px solid #44455a; height: 0; margin: 1px 0 1px -2px; width: 0; }
      .side { display: flex; flex-direction: column; gap: 1px; left: 1264px; position: absolute; top: 152px; }
      .side-tab { background: #cfd1de; border: 1px solid #8b8da0; border-radius: 3px 0 0 3px; height: 21.500px; overflow: hidden; padding: 3px 0 0 2px; width: 13px; }
      .side-tab:first-child { background: #f7f7fb; }
      .motion { background: linear-gradient(#dbdceb, #ced1e7 3px, #cdd1e6); border-bottom: 1px solid #3a3a42; height: 23px; }
      .slider { align-items: center; background: linear-gradient(transparent 7px, #a1a2b0 7px, #fff 9px, #fff 10px, transparent 10px); display: flex; flex: none; height: 16px; margin-left: 11px; width: 174px; }
      .slider i { background: linear-gradient(90deg, #fff, #d4d5df); border: 1px solid #9c9dac; border-radius: 2px; height: 14px; margin-left: 108px; width: 8px; }
      .speed { background: #fff; height: 18px; justify-content: space-between; margin-left: 8px; padding-left: 5px; width: 74px; }
      .mtabs { background: #e0e0ea; height: 13px; padding-left: 4px; }
      .nav { background: #a9aab8; border-right: 1px solid #898a9a; color: #777886; font: 7px/12px "DejaVu Sans"; height: 13px; text-align: center; width: 14.500px; }
      .mtab { background: #bbbccb; border: solid #5b5c68; border-width: 0 1px 1px; color: #33333c; font: 12px/11px "Liberation Sans", sans-serif; height: 13px; margin-left: 3px; padding-left: 2px; text-align: center; width: 57px; }
      .mtab.on { background: #e0e0ea; border-width: 0 3px 0 0; color: #1c1c22; font-weight: 700; letter-spacing: -.35px; margin: 0; padding-right: 6px; width: 146px; }
      .tools { background: linear-gradient(#f1f1fe, #d6d6e6 50%, #bebed0); border-bottom: 1px solid #777885; height: 28px; }
      .grip { border-left: 2px dotted #9a9bad; flex: none; height: 22px; width: 2px; }
      .grip.next { margin-left: 4px; }
      .end { background: #fff; border-left: 1px solid #9a9bad; flex: none; height: 26px; margin-left: 8px; width: 2px; }
      .status { background: linear-gradient(#e8e8f0, #d0d1e0 3px, #bfc0d0); height: 18px; letter-spacing: -.25px; padding-left: 2px; }
      .edition { width: 997px; }
      .editing { width: 115px; }
      .custom { color: #adaebe; width: 68px; }
      .taskbar { background: #020203; color: #fff; height: 27px; position: relative; }
      .orb { left: 8px; position: absolute; top: -5px; }
      .task { background: linear-gradient(#4a4a4c, #232324 45%, #0c0c0d); border: 1px solid #6d6d70; border-radius: 2px; flex: none; height: 25px; letter-spacing: -.2px; margin-right: 4px; padding-left: 7px; width: 148px; }
      .task.on { background: linear-gradient(#b9b9b9, #858585 45%, #6a6a6a); border-color: #c9c9c9; padding-left: 7px; }
      .task sw-icon { margin-right: 4px; }
      .clock { font-size: 11.500px; letter-spacing: -.3px; margin-left: 31px; }
      .edge { background: linear-gradient(90deg, #000 35%, transparent); height: 693px; left: 0; position: absolute; top: 0; width: 6px; }
      .edge.right { background: linear-gradient(270deg, #000 60%, transparent); left: 1275px; width: 5px; }
      .pointer { left: 106px; position: absolute; top: 556px; }
    `;
  }

  renderNode([icon, label, plus]: [string, string, boolean?]) {
    return html`
      <div class="node">
        <span class="twig">${plus ? html`<span class="plus">+</span>` : ''}</span>
        <sw-icon name=${icon} size="15"></sw-icon>${label}
      </div>`;
  }

  renderTitle() {
    return html`
      <header class="row title">
        <sw-icon name="logo" size="20"></sw-icon>
        <div class="brand">SOLID<span>WORKS</span></div>
        <div class="brand-edge"></div>
        <nav class="row menu">
          ${MENU.map(([label, w]) => html`<span class="menu-item" style="width:${w}px">${label}</span>`)}
          <sw-icon name="pin" size="12"></sw-icon>
        </nav>
        ${strip(623, [['page', 635], ['caret', 653], ['open', 670], ['caret', 687], ['save', 704], ['caret', 720], ['rebuild', 737, 16],
          ['print', 759], ['caretDark', 776, 12], ['undo', 793], ['caret', 809], ['cursor', 826, 13], ['caret', 842], ['light', 861],
          ['prop', 882], ['list', 904], ['caret', 920]])}
        <span class="doc">Po...</span>
        <div class="row search">
          ${strip(961, [['folderOpen', 972]])}
          <span class="search-text">Pesquisar arquivos e modelos</span>
          ${strip(1151, [['search', 1159, 16], ['caretDark', 1175, 12]])}
        </div>
        ${strip(1182, [['help', 1196, 12], ['caretDark', 1213, 11], ['min', 1230, 14], ['restore', 1252], ['closeX', 1272, 12]])}
      </header>`;
  }

  renderRibbon() {
    return html`
      <section class="ribbon">
        ${RIBBON.map(([icon, lines, w], i) => html`
          ${i === 3 ? html`<i class="divider"></i>` : ''}
          <div class="tool" style="width:${w}px">
            <sw-icon name=${icon} size="15"></sw-icon>
            <div class="tool-label">${lines.map((line) => html`${line}<br>`)}</div>
          </div>`)}
        <svg class="ds" width="64" height="66" viewBox="1213 28 64 66" fill="#d9dbe9">
          <path d="M1232 31Q1258 27 1259 35Q1257 46 1235 57L1233 54Q1250 43 1250 37Q1248 32 1232 31Z"/>
          <path d="M1218 63Q1246 56 1245 66Q1241 84 1211 93L1222 70L1228 68L1220 86Q1236 79 1238 68Q1238 63 1219 66Z"/>
          <path d="M1277 52Q1252 52 1251 60Q1252 66 1265 73Q1271 79 1262 82L1246 84L1247 88Q1272 87 1274 78Q1274 72 1260 64Q1254 56 1277 56Z"/>
        </svg>
      </section>`;
  }

  renderPanel() {
    return html`
      <aside class="panel">
        <div class="row ptabs">
          ${['part', 'propMgr', 'config', 'dimx', 'globe'].map((name, i) => html`
            <span class="ptab ${i ? '' : 'on'}"><sw-icon name=${name} size="16"></sw-icon></span>`)}
          <sw-icon class="more" name="chev2" size="14"></sw-icon>
        </div>
        <div class="row filter"><sw-icon name="funnelBlue" size="13"></sw-icon></div>
        <div class="tree">
          <div class="nodes">
            <div class="node"><sw-icon name="part" size="14"></sw-icon>${ROOT_LABEL}</div>
            ${FEATURES.map((n) => this.renderNode(n))}
          </div>
          <div class="vbar"><i class="arrow up"></i><span class="thumb">≡</span><i class="arrow down"></i></div>
        </div>
        <div class="row hbar"><i class="arrow left"></i><span class="thumb">III</span><i class="arrow right"></i></div>
        <div class="row fbar">
          <span class="fbox"><sw-icon name="funnelBare" size="14"></sw-icon></span>
          ${strip(94, [['fAnim', 104], ['fDrive', 126], ['fSel', 148], ['fRes', 170]])}
        </div>
        <div class="study">
          <div class="node"><span class="root-box">-</span><sw-icon name="part" size="15"></sw-icon>${ROOT_LABEL}</div>
          ${STUDY.map((n) => this.renderNode(n))}
        </div>
      </aside>`;
  }

  renderBottom() {
    return html`
      <div class="row motion">
        ${strip(0, [['calc', 14], ['playStart', 36], ['play', 57, 13], ['stop', 79]])}
        <div class="slider"><i></i></div>
        <div class="row speed">2x<sw-icon name="caretDark" size="15"></sw-icon></div>
        ${strip(353, [['loop', 366], ['caretDark', 382, 13], ['saveG', 400], ['|', 414], ['wizard', 430], ['|', 443], ['key', 459],
          ['keyAdd', 480], ['|', 494], ['list', 509], ['|', 523], ['up2', 1272, 14]])}
      </div>
      <div class="row mtabs">
        ${['|◀', '◀', '▶', '▶|'].map((t) => html`<span class="nav">${t}</span>`)}
        <span class="mtab">Modelo</span><span class="mtab on">Estudo de movimento 1</span>
      </div>
      <div class="row tools">
        ${strip(0, [['|', 5]])}
        ${strip(6, [['normal', 23], ['|', 37], ['cFront', 52], ['cBack', 74], ['cLeft', 95], ['cRight', 117], ['cTop', 139],
          ['cBottom', 160], ['iso', 182], ['tri', 203], ['tri', 225], ['|', 239], ['wrench', 254]])}
        <i class="end"></i><i class="grip next"></i>
        ${strip(277.5, [['g1', 295], ['g2', 317], ['g3', 338], ['g4', 360], ['g5', 382], ['g6', 403], ['|', 417], ['g7', 433],
          ['g8', 455], ['g9', 477], ['|', 490], ['g10', 505], ['g11', 527], ['g12', 549], ['g13', 571], ['|', 584],
          ['g14', 599], ['g15', 621], ['g16', 643], ['g17', 664], ['g18', 686], ['g19', 708]])}
        <i class="end"></i>
      </div>
      <footer class="row status">
        <span class="edition">SolidWorks Premium 2012 x64 Edition</span>
        <span class="editing">Editando Peça</span>
        <span class="custom">Personalizar</span>
        ${strip(1182, [['caret', 1187, 8], ['helpGreen', 1211, 12], ['tag', 1272, 14]])}
      </footer>`;
  }

  renderTaskbar() {
    return html`
      <div class="row taskbar">
        <svg class="orb" width="36" height="36" viewBox="0 0 36 36">
          <defs><radialGradient id="orb" cy=".85"><stop offset="0" stop-color="#7fe0f4"/><stop offset=".5" stop-color="#2474ad"/><stop offset="1" stop-color="#17385c"/></radialGradient></defs>
          <circle cx="18" cy="18" r="17" fill="url(#orb)" stroke="#6c8aa4"/>
          <path d="M3 15a15 14 0 0 1 30 0q-15-5-30 0z" fill="#fff" opacity=".3"/>
          <path d="M10 11q4-3 8 0l-1 7q-4-3-8 0z" fill="#ee6428"/><path d="M19 11q4 3 8 0l-1 7q-4 3-8 0z" fill="#8cc63e"/>
          <path d="M9 19q4-3 8 0l-1 7q-4-3-8 0z" fill="#48a6e8"/><path d="M18 19q4 3 8 0l-1 7q-4 3-8 0z" fill="#fcc92c"/>
        </svg>
        ${strip(0, [['calcWin', 76, 14], ['pdf', 120], ['', 137, 13]])}
        ${TASKS.map(([icon, label, on]) => html`
          <div class="row task ${on ? 'on' : ''}"><sw-icon name=${icon} size="15"></sw-icon>${label}</div>`)}
        ${strip(600, [['t1', 934], ['t2', 955], ['t3', 978], ['t4', 1001], ['bt', 1024], ['orbit', 1046], ['sync', 1069],
          ['avast', 1091], ['flag', 1114], ['power', 1136], ['signal', 1159], ['sound', 1182]])}
        <span class="clock">01:12</span>
      </div>`;
  }

  render() {
    return html`
      ${this.renderTitle()}
      ${this.renderRibbon()}
      <main class="main">
        <div class="row head">
          ${TABS.map(([label, w], i) => html`<span class="tab ${i === 4 ? 'on' : ''}" style="width:${w}px">${label}</span>`)}
          <div class="row views">
            ${strip(504, [['zoomFit', 610], ['zoomArea', 632], ['prevView', 655], ['section', 676], ['viewOr', 697], ['caretMid', 711, 13],
              ['display', 728], ['caretMid', 742, 13], ['glasses', 759], ['caretMid', 772, 11], ['appear', 790], ['scene', 812],
              ['caretMid', 826, 12], ['viewSet', 844], ['caretMid', 857, 11],
              ['paneL', 1182], ['paneR', 1204], ['min', 1225, 13], ['restore', 1246, 14], ['closeX', 1268, 12]])}
          </div>
        </div>
        <div class="row body">
          ${this.renderPanel()}
          <model-view></model-view>
        </div>
      </main>
      ${this.renderBottom()}
      ${this.renderTaskbar()}
      <div class="handle"><i></i><i></i><i></i></div>
      <div class="side">
        ${['house', 'library', 'folderOpen', 'palette', 'globeSide', 'propMgr'].map((name) => html`
          <span class="side-tab"><sw-icon name=${name} size="15"></sw-icon></span>`)}
      </div>
      <svg class="pointer" width="12" height="19" viewBox="0 0 12 19">
        <path d="M1 1v14l3.500-3 2.500 6 2.500-1L7 11.500h4z" fill="#fff" stroke="#333"/>
      </svg>
      <div class="edge"></div><div class="edge right"></div>
    `;
  }
}
